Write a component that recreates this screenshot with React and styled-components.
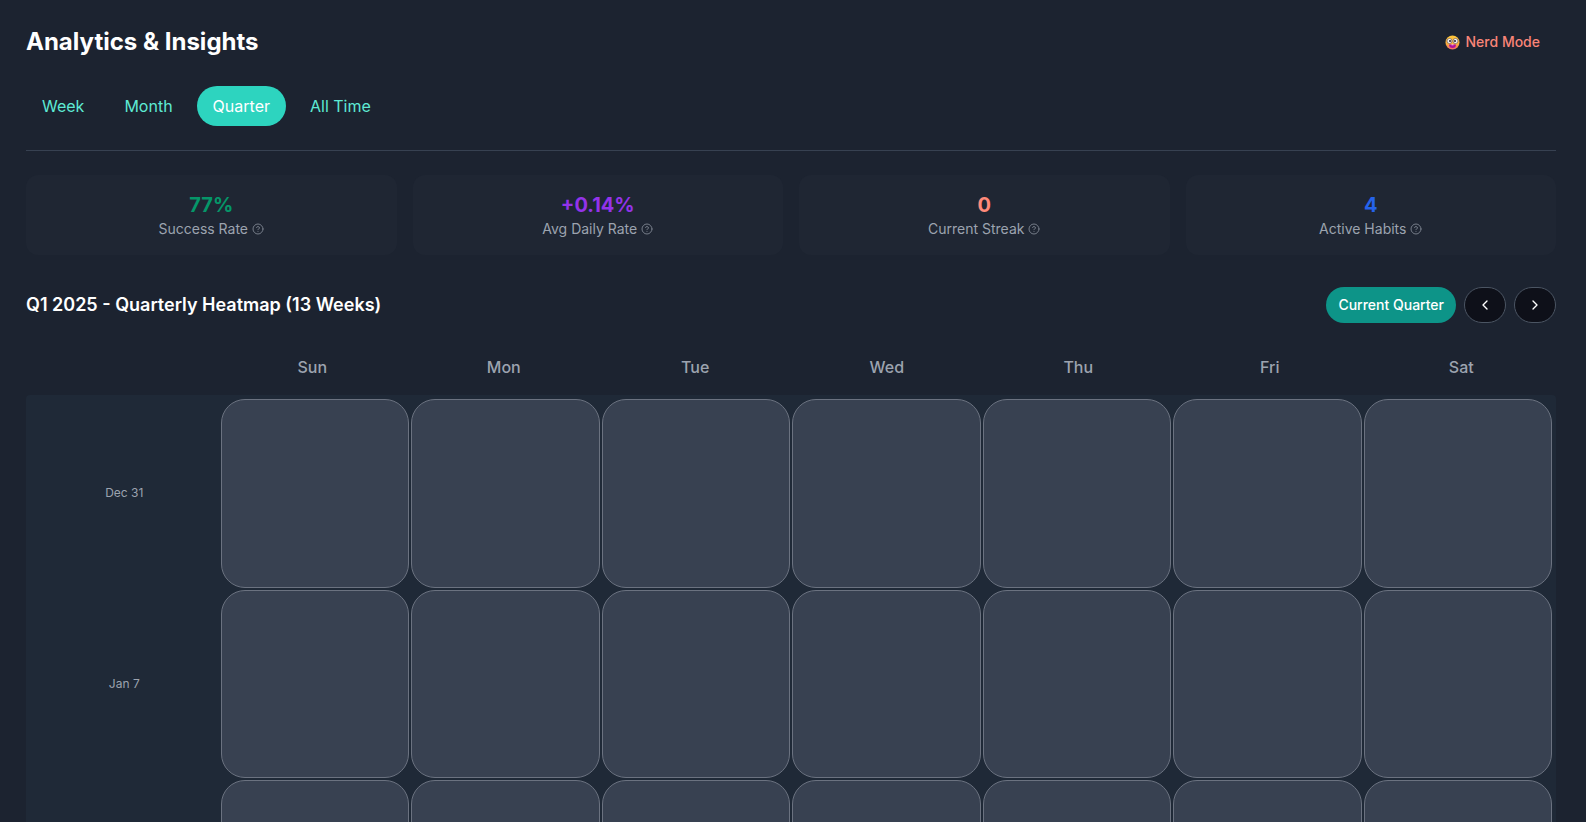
import React from "react";
import styled, { createGlobalStyle } from "styled-components";
import { ChevronLeft, ChevronRight, CircleQuestionMark } from "lucide-react";

const GlobalStyle = createGlobalStyle`
  *, *::before, *::after { box-sizing: border-box; }
  html { background: #1c2330; scrollbar-width: none; }
  body {
    margin: 0;
    color: #ffffff;
    font-family: Inter, "Noto Sans", "Liberation Sans", sans-serif;
    font-size: 16px;
    line-height: 24px;
  }
  button { font: inherit; cursor: pointer; }
`;

const Page = styled.main`
  padding: 24px 30px 32px 26px;
`;

const TitleBar = styled.header`
  display: flex;
  align-items: center;
  justify-content: space-between;
  min-height: 36px;
  margin-bottom: 26px;
`;

const Title = styled.h1`
  margin: 0;
  font-size: 24px;
  line-height: 32px;
  font-weight: 700;
`;

const NerdButton = styled.button`
  display: flex;
  align-items: center;
  gap: 6px;
  padding: 8px 16px;
  border: 0;
  background: transparent;
  color: #f98578;
  font-size: 14px;
  line-height: 20px;
  font-weight: 500;
`;

const Tabs = styled.nav`
  display: flex;
  gap: 8px;
  padding-bottom: 24px;
  margin-bottom: 24px;
  border-bottom: 1px solid #374151;
`;

const Tab = styled.button`
  padding: 8px 16px;
  border: 0;
  border-radius: 20px;
  background: ${(p) => (p.$active ? "#2dd4bf" : "transparent")};
  color: ${(p) => (p.$active ? "#ffffff" : "#5eead4")};
  font-weight: 400;
  line-height: 24px;
`;

const Stats = styled.section`
  display: grid;
  grid-template-columns: repeat(4, 1fr);
  gap: 16px;
  margin-bottom: 32px;
`;

const StatCard = styled.div`
  padding: 16px;
  border-radius: 12px;
  background: #1f2633;
  text-align: center;
`;

const StatValue = styled.div`
  color: ${(p) => p.$color};
  font-size: 20px;
  line-height: 28px;
  font-weight: 700;
`;

const StatLabel = styled.div`
  display: flex;
  align-items: center;
  justify-content: center;
  gap: 4px;
  color: #9ca3af;
  font-size: 14px;
  line-height: 20px;

  svg { opacity: 0.7; }
`;

const HeatmapBar = styled.div`
  display: flex;
  align-items: center;
  justify-content: space-between;
  margin-bottom: 24px;
`;

const HeatmapTitle = styled.h2`
  margin: 0;
  font-size: 18px;
  line-height: 28px;
  font-weight: 600;
`;

const Pager = styled.div`
  display: flex;
  gap: 8px;
`;

const CurrentButton = styled.button`
  height: 36px;
  padding: 0 12px;
  border: 0;
  border-radius: 18px;
  background: #0d9488;
  color: #ffffff;
  font-size: 14px;
  line-height: 20px;
  font-weight: 500;
`;

const StepButton = styled.button`
  display: flex;
  align-items: center;
  justify-content: center;
  width: 42px;
  height: 36px;
  padding: 0;
  border: 1px solid #4b5563;
  border-radius: 18px;
  background: #0e1019;
  color: #ffffff;
`;

const WeekGrid = styled.div`
  display: grid;
  grid-template-columns: repeat(8, 1fr);
  gap: 2px;
`;

const DayNames = styled(WeekGrid)`
  margin-bottom: 8px;
`;

const DayName = styled.div`
  padding: 8px 0;
  color: #9ca3af;
  font-weight: 500;
  text-align: center;
`;

const HeatmapPanel = styled(WeekGrid)`
  padding: 4px;
  border-radius: 4px;
  background: #1f2937;
`;

const WeekLabel = styled.div`
  display: flex;
  align-items: center;
  justify-content: center;
  color: #9ca3af;
  font-size: 12px;
  line-height: 16px;
`;

const DayCell = styled.div`
  aspect-ratio: 1;
  border: 1px solid #6b7280;
  border-radius: 24px;
  background: #384151;
`;

function NerdFace() {
  return (
    <svg width="15" height="15" viewBox="0 0 30 30" aria-hidden="true">
      <defs>
        <linearGradient id="face" x1="0" y1="0" x2="0" y2="1">
          <stop offset="0" stopColor="#ffc83a" />
          <stop offset="0.6" stopColor="#fbad3c" />
          <stop offset="1" stopColor="#f4646c" />
        </linearGradient>
      </defs>
      <circle cx="15" cy="15" r="14" fill="url(#face)" />
      <circle cx="9" cy="12" r="5" fill="#f4f4f4" stroke="#7a6a62" strokeWidth="1.6" />
      <circle cx="21" cy="12" r="5" fill="#f4f4f4" stroke="#7a6a62" strokeWidth="1.6" />
      <circle cx="10" cy="12" r="2.2" fill="#3a2a3c" />
      <circle cx="20" cy="12" r="2.2" fill="#3a2a3c" />
      <path d="M8 19 H22 A7 7 0 0 1 8 19 Z" fill="#b1109c" />
      <path d="M13 19 H17 V20.5 H13 Z" fill="#ffffff" />
    </svg>
  );
}

const RANGES = ["Week", "Month", "Quarter", "All Time"];

const STATS = [
  { value: "77%", label: "Success Rate", color: "#059669" },
  { value: "+0.14%", label: "Avg Daily Rate", color: "#9333ea" },
  { value: "0", label: "Current Streak", color: "#ff8a7a" },
  { value: "4", label: "Active Habits", color: "#2563eb" },
];

const DAYS = ["Sun", "Mon", "Tue", "Wed", "Thu", "Fri", "Sat"];

const WEEKS = ["Dec 31", "Jan 7", "Jan 14"];

export default function App() {
  return (
    <>
      <GlobalStyle />
      <Page>
        <TitleBar>
          <Title>Analytics &amp; Insights</Title>
          <NerdButton type="button">
            <NerdFace />
            Nerd Mode
          </NerdButton>
        </TitleBar>

        <Tabs>
          {RANGES.map((range) => (
            <Tab key={range} type="button" $active={range === "Quarter"}>
              {range}
            </Tab>
          ))}
        </Tabs>

        <Stats>
          {STATS.map((stat) => (
            <StatCard key={stat.label}>
              <StatValue $color={stat.color}>{stat.value}</StatValue>
              <StatLabel>
                {stat.label}
                <CircleQuestionMark size={12} />
              </StatLabel>
            </StatCard>
          ))}
        </Stats>

        <HeatmapBar>
          <HeatmapTitle>Q1 2025 - Quarterly Heatmap (13 Weeks)</HeatmapTitle>
          <Pager>
            <CurrentButton type="button">Current Quarter</CurrentButton>
            <StepButton type="button" aria-label="Previous quarter">
              <ChevronLeft size={16} />
            </StepButton>
            <StepButton type="button" aria-label="Next quarter">
              <ChevronRight size={16} />
            </StepButton>
          </Pager>
        </HeatmapBar>

        <DayNames>
          <span />
          {DAYS.map((day) => (
            <DayName key={day}>{day}</DayName>
          ))}
        </DayNames>
        <HeatmapPanel>
          {WEEKS.map((week) => (
            <React.Fragment key={week}>
              <WeekLabel>{week}</WeekLabel>
              {DAYS.map((day) => (
                <DayCell key={day} />
              ))}
            </React.Fragment>
          ))}
        </HeatmapPanel>
      </Page>
    </>
  );
}
